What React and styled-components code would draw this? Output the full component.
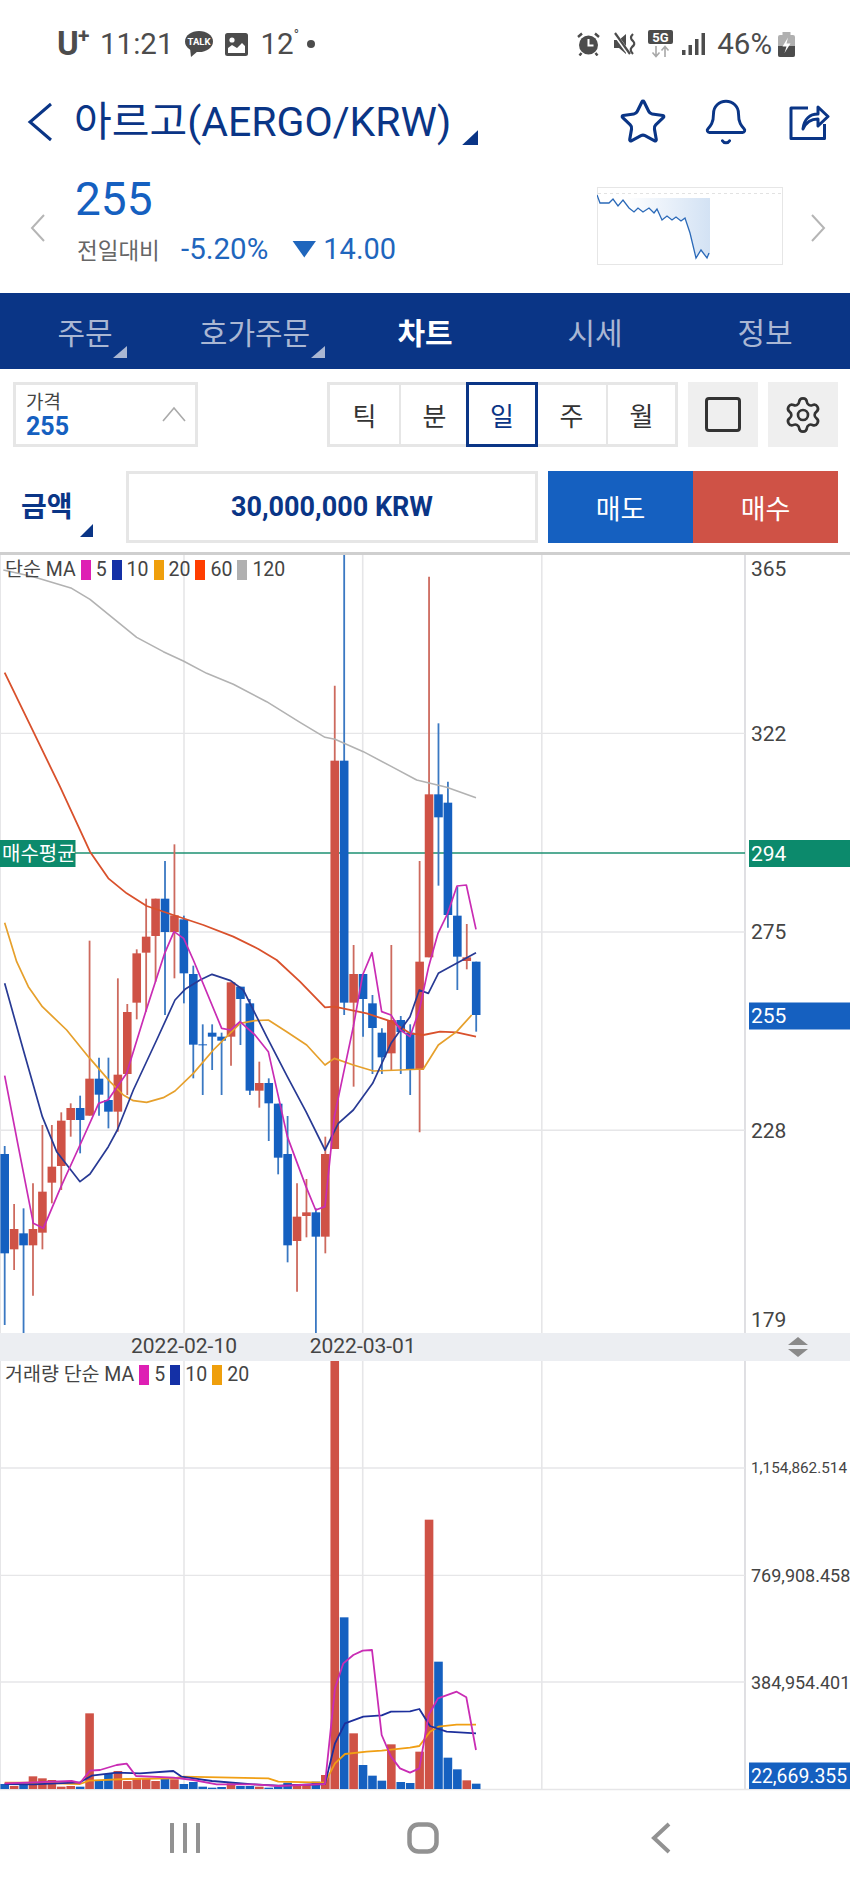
import { Fragment } from "react";
import styled, { createGlobalStyle } from "styled-components";
import { Star, Bell, Settings } from "lucide-react";

const NAVY = "#0a3586";
const BLUE = "#1560c0";
const RED = "#cf5246";
const WICK_BLUE = "#3a78c2";
const WICK_RED = "#cd6a5e";
const GRID = "#e6e6e8";

const GlobalStyle = createGlobalStyle`
  html, body { margin: 0; padding: 0; background: #fff; }
  body { font-family: Roboto, "Noto Sans CJK KR", sans-serif; width: 850px; }
`;

const Page = styled.div`
  width: 850px;
  height: 1889px;
  overflow: hidden;
  background: #fff;
`;

/* status bar */
const StatusBar = styled.div`
  height: 88px;
  box-sizing: border-box;
  padding: 31px 55px 0 57px;
  display: flex;
  justify-content: space-between;
  color: #4c4c4c;
`;

const StatusGroup = styled.div`
  display: flex;
  align-items: center;
  height: 26px;
  gap: ${(p) => p.$gap}px;
`;

const Carrier = styled.span`
  font-size: 33px;
  font-weight: 700;
  line-height: 26px;
  width: 32px;
  margin-right: -1px;
  position: relative;
  sup {
    position: absolute;
    left: 21px;
    top: -5px;
    font-size: 21px;
    line-height: 1;
  }
`;

const StatusText = styled.span`
  font-size: 29.5px;
  line-height: 26px;
  white-space: nowrap;
`;

const Degree = styled.span`
  font-size: 14px;
  line-height: 0;
  vertical-align: 14px;
`;

const StatusDot = styled.span`
  width: 8px;
  height: 8px;
  border-radius: 50%;
  background: #4c4c4c;
  margin-left: -4px;
`;

const StatusSlot = styled.span`
  display: flex;
  margin-left: ${(p) => p.$left || 0}px;
`;

/* title row */
const Header = styled.div`
  height: 68px;
  display: flex;
  align-items: center;
  padding-left: 27px;
  color: ${NAVY};
`;

const Title = styled.h1`
  margin: 0 0 0 21px;
  font-size: 41px;
  font-weight: 400;
  line-height: 68px;
  white-space: nowrap;
`;

const TitleCorner = styled.span`
  width: 16px;
  height: 15px;
  margin: 31px 0 0 11px;
  background: ${NAVY};
  clip-path: polygon(100% 0, 100% 100%, 0 100%);
`;

const HeaderIcons = styled.div`
  margin-left: auto;
  display: flex;
  align-items: center;
  gap: 34px;
  padding-right: 20px;
`;

const StarIcon = styled(Star)`
  margin-right: 2px;
`;

const BellIcon = styled(Bell)`
  margin: 0 3px 0 -3px;
`;

/* quote row */
const Quote = styled.div`
  height: 137px;
  display: flex;
  padding-left: 30px;
`;

const QuoteChevron = styled.div`
  margin-top: 57px;
  height: 30px;
`;

const PriceBlock = styled.div`
  margin-left: 31px;
  padding-top: 20px;
  width: 520px;
`;

const Price = styled.div`
  font-size: 46px;
  line-height: 46px;
  margin-left: -2px;
  color: ${BLUE};
`;

const Change = styled.div`
  display: flex;
  align-items: center;
  margin-top: 11px;
  height: 32px;
  color: #1f66bd;
  font-size: 29px;
`;

const ChangeLabel = styled.span`
  font-size: 22.5px;
  color: #666;
  width: 104px;
`;

const ChangeValue = styled.span`
  font-size: 29.5px;
`;

const ChangeArrow = styled.span`
  width: 24px;
  height: 17px;
  margin: 0 7px 0 24px;
  background: #1f66bd;
  clip-path: polygon(0 0, 100% 0, 50% 100%);
`;

const MiniChart = styled.svg`
  width: 186px;
  height: 78px;
  margin: 31px 27px 0 0;
  display: block;
`;

/* tab bar */
const Tabs = styled.nav`
  height: 76px;
  background: ${NAVY};
  display: grid;
  grid-template-columns: repeat(5, 170px);
`;

const Tab = styled.div`
  position: relative;
  display: flex;
  align-items: center;
  justify-content: center;
  padding-bottom: 1px;
  font-size: 30px;
  font-weight: ${(p) => (p.$active ? 700 : 400)};
  color: ${(p) => (p.$active ? "#fff" : "#aab7d3")};
`;

const TabCorner = styled.span`
  position: absolute;
  top: 53px;
  left: ${(p) => p.$left}px;
  width: 14px;
  height: 12px;
  background: #aab7d3;
  clip-path: polygon(100% 0, 100% 100%, 0 100%);
`;

/* period + tools row */
const Toolbar = styled.div`
  height: 65px;
  margin-top: 13px;
  padding: 0 11px 0 13px;
  display: flex;
  align-items: stretch;
`;

const PriceSelect = styled.div`
  width: 185px;
  box-sizing: border-box;
  border: 3px solid #e6e6e6;
  padding: 7px 0 0 10px;
  position: relative;
`;

const SelectLabel = styled.div`
  font-size: 19px;
  line-height: 22px;
  color: #444;
`;

const SelectValue = styled.div`
  font-size: 25px;
  line-height: 25px;
  font-weight: 700;
  color: ${BLUE};
`;

const SelectChevron = styled.svg`
  position: absolute;
  right: 9px;
  top: 21px;
  width: 24px;
  height: 16px;
`;

const Periods = styled.div`
  margin-left: 129px;
  width: 351px;
  display: grid;
  grid-template-columns: repeat(5, 1fr);
  box-sizing: border-box;
  border: 3px solid #e6e6e6;
`;

const Period = styled.div`
  display: flex;
  align-items: center;
  justify-content: center;
  font-size: 26px;
  color: #333;
  box-sizing: border-box;
  border-left: ${(p) => (p.$first ? "none" : "2px solid #e6e6e6")};
  ${(p) => p.$active && `
    border: 3px solid ${NAVY};
    margin: -3px -1px -3px -2px;
    color: ${NAVY};
  `}
`;

const ToolButton = styled.div`
  width: 70px;
  margin-left: 10px;
  background: #efefef;
  display: flex;
  align-items: center;
  justify-content: center;
  color: #333;
`;

const SquareGlyph = styled.span`
  width: 36px;
  height: 35px;
  box-sizing: border-box;
  border: 3.5px solid #333;
  border-radius: 4px;
`;

/* order row */
const OrderRow = styled.div`
  height: 72px;
  margin-top: 24px;
  padding: 0 11px 0 21px;
  display: flex;
`;

const AmountLabel = styled.div`
  position: relative;
  width: 105px;
  font-size: 28px;
  font-weight: 700;
  color: ${NAVY};
  line-height: 74px;
`;

const AmountCorner = styled.span`
  position: absolute;
  left: 59px;
  top: 53px;
  width: 13px;
  height: 13px;
  background: ${NAVY};
  clip-path: polygon(100% 0, 100% 100%, 0 100%);
`;

const AmountInput = styled.div`
  width: 412px;
  box-sizing: border-box;
  border: 3px solid #e6e6e6;
  display: flex;
  align-items: center;
  justify-content: center;
  font-size: 27px;
  font-weight: 700;
  color: ${NAVY};
`;

const TradeButton = styled.div`
  width: 145px;
  margin-left: ${(p) => p.$gap || 0}px;
  background: ${(p) => p.$color};
  display: flex;
  align-items: center;
  justify-content: center;
  font-size: 27px;
  color: #fff;
`;

/* charts */
const ChartFrame = styled.section`
  position: relative;
  height: ${(p) => p.$height}px;
  margin-top: ${(p) => p.$top || 0}px;
  ${(p) => p.$rule && "border-top: 3px solid #cfcfcf;"}
  svg { display: block; }
`;

const Legend = styled.div`
  position: absolute;
  left: 5px;
  top: ${(p) => p.$top}px;
  display: flex;
  align-items: center;
  gap: 5px;
  font-size: 19.5px;
  line-height: 20px;
  color: #444;
  white-space: nowrap;
`;

const Swatch = styled.span`
  width: 10px;
  height: 20px;
  background: ${(p) => p.$color};
`;

const DateBar = styled.div`
  position: relative;
  height: 28px;
  background: #eceef2;
`;

const DateTick = styled.span`
  position: absolute;
  left: ${(p) => p.$x}px;
  top: 0;
  transform: translateX(-50%);
  font-size: 21px;
  line-height: 27px;
  color: #444;
`;

const ResizeHandle = styled.svg`
  position: absolute;
  left: 787px;
  top: 3px;
  width: 22px;
  height: 22px;
`;

const AxisText = styled.text`
  font-family: Roboto, sans-serif;
  font-size: ${(p) => p.$size || 21}px;
  fill: ${(p) => p.$fill || "#444"};
  dominant-baseline: central;
`;

const TagText = styled.text`
  font-family: Roboto, "Noto Sans CJK KR", sans-serif;
  font-size: 20px;
  fill: #fff;
  dominant-baseline: central;
`;

/* system nav */
const SystemNav = styled.div`
  height: 94px;
  padding-left: 66px;
  display: grid;
  grid-template-columns: repeat(3, 238px);
  align-items: center;
  justify-items: center;
`;

const xAt = (i) => 4.7 + i * 9.43;
const zY = (z) => 930 + z / 3;
const zPoints = (pts, toY) => pts.map(([x, y]) => `${x / 3},${toY(y)}`).join(" ");

// [bodyTop, bodyBottom, wickTop, wickBottom, up], y in crop units of the lower price area
const candles = [
  [672, 970, 648, 1185, 0], [897, 958, 822, 1020, 1], [910, 946, 835, 1210, 0], [897, 946, 760, 1097, 1],
  [785, 908, 585, 958, 1], [710, 758, 585, 820, 1], [572, 708, 547, 780, 1], [534, 570, 520, 620, 1],
  [534, 570, 497, 670, 0], [446, 557, 32, 557, 1], [446, 494, 383, 557, 0], [510, 545, 383, 595, 0],
  [434, 545, 145, 605, 1], [246, 432, 222, 495, 1], [70, 218, 58, 268, 1], [20, 68, -94, 245, 1],
  [-94, 18, -94, 155, 1], [-94, 6, -207, 255, 0], [-44, 6, -257, 145, 1], [-32, 130, -43, 220, 0],
  [132, 344, 107, 445, 0], [343, 346, 283, 495, 0], [308, 320, 283, 420, 0], [320, 332, 308, 495, 0],
  [157, 320, 157, 407, 1], [170, 207, 170, 345, 0], [220, 482, 207, 495, 0], [459, 482, 395, 533, 1],
  [459, 520, 445, 633, 0], [521, 683, 521, 733, 0], [672, 946, 558, 997, 0], [860, 933, 760, 1085, 1],
  [847, 858, 747, 922, 1], [847, 920, 835, 1210, 0], [672, 920, 620, 970, 1], [-508, 657, -733, 657, 1],
  [-508, 218, -1125, 255, 0], [132, 218, 45, 470, 1], [132, 207, 132, 320, 0], [220, 294, 195, 432, 0],
  [308, 382, 295, 432, 0], [270, 370, 45, 420, 1], [270, 306, 258, 432, 0], [308, 420, 283, 495, 0],
  [95, 420, -207, 607, 1], [-407, 82, -1060, 82, 1], [-407, -338, -620, -133, 0], [-382, -45, -445, -7, 0],
  [-43, 80, -130, 180, 0], [82, 93, -18, 118, 1], [95, 255, 95, 305, 0],
];

const ma120 = [[10, -1080], [100, -1060], [215, -1025], [270, -992], [340, -935], [410, -878], [490, -835], [550, -807], [620, -770], [700, -737], [800, -685], [900, -623], [975, -578], [1005, -572], [1090, -535], [1175, -490], [1250, -450], [1340, -428], [1428, -397]];
const ma60 = [[14, -772], [100, -595], [180, -430], [270, -235], [325, -155], [380, -110], [440, -72], [520, -45], [610, -15], [700, 20], [775, 57], [830, 90], [900, 155], [975, 232], [1003, 230], [1100, 250], [1175, 275], [1230, 310], [1270, 315], [1320, 305], [1370, 307], [1428, 320]];
const ma20 = [[14, -22], [50, 95], [85, 170], [127, 230], [200, 300], [265, 380], [330, 455], [370, 495], [400, 512], [440, 517], [490, 503], [525, 483], [580, 430], [640, 360], [690, 310], [720, 280], [765, 272], [805, 270], [860, 305], [920, 345], [975, 405], [1003, 385], [1060, 405], [1120, 423], [1200, 420], [1270, 417], [1315, 345], [1370, 305], [1415, 255]];
const ma10 = [[14, 160], [70, 360], [127, 560], [170, 665], [240, 755], [270, 732], [325, 650], [352, 600], [400, 480], [470, 330], [525, 210], [555, 178], [600, 150], [636, 133], [692, 152], [730, 180], [800, 320], [862, 440], [918, 545], [975, 660], [1015, 580], [1060, 540], [1118, 460], [1173, 340], [1230, 260], [1258, 180], [1285, 190], [1315, 130], [1370, 100], [1428, 68]];
const ma5 = [[14, 437], [55, 650], [100, 880], [130, 895], [183, 770], [240, 645], [296, 520], [324, 510], [380, 430], [437, 245], [494, 70], [522, 5], [551, 25], [580, 90], [665, 295], [692, 300], [720, 275], [765, 315], [805, 365], [862, 620], [918, 770], [947, 840], [975, 830], [1003, 560], [1060, 290], [1088, 135], [1116, 68], [1145, 245], [1173, 255], [1201, 300], [1230, 320], [1258, 240], [1286, 110], [1314, 10], [1343, -50], [1371, -132], [1399, -135], [1428, -2]];

// bar tops, [top, up], y in crop units of the volume area
const volumes = [
  [552, 0], [558, 1], [555, 0], [529, 1], [535, 1], [540, 1], [560, 1], [558, 1], [560, 0], [340, 1],
  [543, 0], [522, 0], [513, 1], [543, 1], [535, 1], [535, 1], [543, 1], [535, 0], [538, 1], [552, 0],
  [546, 0], [560, 0], [563, 0], [561, 0], [550, 1], [558, 0], [558, 0], [560, 1], [563, 0], [560, 0],
  [548, 0], [552, 1], [552, 1], [545, 0], [525, 1], [-720, 1], [52, 0], [400, 1], [495, 0], [527, 0],
  [542, 0], [433, 1], [546, 0], [549, 0], [455, 1], [-241, 1], [185, 0], [473, 0], [508, 0], [541, 1], [551, 0],
];

const volY = (z) => 1600 + z / 3;
const vol20 = [[14, 548], [100, 548], [240, 552], [268, 542], [380, 537], [520, 535], [550, 530], [805, 535], [835, 545], [975, 548], [1005, 490], [1035, 462], [1100, 455], [1145, 452], [1230, 443], [1258, 438], [1290, 395], [1315, 380], [1370, 374], [1428, 374]];
const vol10 = [[14, 552], [100, 553], [240, 547], [275, 527], [350, 518], [420, 520], [520, 513], [545, 530], [636, 543], [760, 553], [835, 557], [975, 552], [1005, 430], [1035, 370], [1090, 350], [1145, 346], [1173, 335], [1230, 334], [1258, 327], [1290, 378], [1340, 395], [1428, 400]];
const vol5 = [[14, 550], [100, 547], [215, 543], [240, 549], [270, 512], [300, 510], [350, 495], [380, 491], [408, 528], [520, 533], [580, 540], [650, 553], [760, 553], [835, 558], [975, 552], [1005, 265], [1030, 190], [1060, 165], [1088, 152], [1116, 150], [1145, 405], [1173, 470], [1200, 505], [1230, 518], [1258, 505], [1286, 345], [1314, 295], [1370, 275], [1399, 292], [1428, 450]];

const spark = [[0, 8], [3, 16], [12, 16], [16, 12], [21, 19], [26, 13], [32, 21], [37, 25], [41, 21], [46, 25], [52, 21], [57, 26], [60, 22], [65, 33], [70, 29], [75, 33], [79, 30], [84, 34], [88, 31], [93, 46], [99, 71], [104, 63], [110, 71], [112, 66]];

const MA_COLORS = { m5: "#de1fb4", m10: "#1430a6", m20: "#ef9f0c", m60: "#ff3d00", m120: "#b0b0b0" };

const Line = ({ points, color, width = 1.6 }) => (
  <polyline points={points} fill="none" stroke={color} strokeWidth={width} strokeLinejoin="round" />
);

const VerticalGrid = ({ top, bottom }) => (
  <>
    {[184, 362.7, 541.8].map((x) => (
      <line key={x} x1={x} x2={x} y1={top} y2={bottom} stroke={GRID} strokeWidth="1.6" />
    ))}
    <line x1="745" x2="745" y1={top} y2={bottom} stroke="#d8d8dc" strokeWidth="1.6" />
    <line x1="0.5" x2="0.5" y1={top} y2={bottom} stroke={GRID} strokeWidth="1" />
  </>
);

const PriceChart = () => (
  <svg width="850" height="778" viewBox="0 555 850 778">
    <VerticalGrid top={555} bottom={1333} />
    {[733.4, 932, 1130.3].map((y) => (
      <line key={y} x1="0" x2="745" y1={y} y2={y} stroke={GRID} strokeWidth="1.4" />
    ))}
    <line x1="0" x2="745" y1="853" y2="853" stroke="#1d9072" strokeWidth="1.6" />
    {candles.map(([bt, bb, wt, wb, up], i) => {
      const x = xAt(i);
      return (
        <g key={i}>
          <line x1={x} x2={x} y1={Math.max(zY(wt), 555)} y2={Math.min(zY(wb), 1333)} stroke={up ? WICK_RED : WICK_BLUE} strokeWidth="1.8" />
          <rect x={x - 4.3} width="8.6" y={zY(bt)} height={(bb - bt) / 3} fill={up ? RED : BLUE} />
        </g>
      );
    })}
    <Line points={zPoints(ma120, zY)} color="#b2b2b2" />
    <Line points={zPoints(ma60, zY)} color="#d9512c" width={1.8} />
    <Line points={zPoints(ma20, zY)} color="#e6a02c" width={1.7} />
    <Line points={zPoints(ma10, zY)} color="#283a94" width={1.7} />
    <Line points={zPoints(ma5, zY)} color="#c92cb4" width={1.7} />

    <rect x="0" y="840" width="75.5" height="27" fill="#0c8a6c" />
    <TagText x="2" y="853.5">매수평균</TagText>
    <rect x="749" y="840" width="101" height="27" fill="#0c8a6c" />
    <AxisText x="751" y="853.5" $fill="#fff">294</AxisText>
    <rect x="749" y="1002.5" width="101" height="27" fill={BLUE} />
    <AxisText x="751" y="1016" $fill="#fff">255</AxisText>
    <AxisText x="751" y="569">365</AxisText>
    <AxisText x="751" y="733.5">322</AxisText>
    <AxisText x="751" y="932">275</AxisText>
    <AxisText x="751" y="1130.5">228</AxisText>
    <AxisText x="751" y="1320">179</AxisText>
  </svg>
);

const VolumeChart = () => (
  <svg width="850" height="430" viewBox="0 1361 850 430">
    <VerticalGrid top={1361} bottom={1789} />
    {[1468, 1575.4, 1682].map((y) => (
      <line key={y} x1="0" x2="745" y1={y} y2={y} stroke={GRID} strokeWidth="1.4" />
    ))}
    <line x1="0" x2="850" y1="1789.5" y2="1789.5" stroke={GRID} strokeWidth="1.4" />
    {volumes.map(([top, up], i) => (
      <rect key={i} x={xAt(i) - 4.3} width="8.6" y={Math.max(volY(top), 1361)} height={1789 - Math.max(volY(top), 1361)} fill={up ? RED : BLUE} />
    ))}
    <Line points={zPoints(vol20, volY)} color="#f09f14" width={1.8} />
    <Line points={zPoints(vol10, volY)} color="#1d2f9c" width={1.8} />
    <Line points={zPoints(vol5, volY)} color="#c92cb4" width={1.8} />

    <AxisText x="751" y="1468" $size={15.3}>1,154,862.514</AxisText>
    <AxisText x="751" y="1575.5" $size={18}>769,908.458</AxisText>
    <AxisText x="751" y="1682" $size={18}>384,954.401</AxisText>
    <rect x="749" y="1762.5" width="101" height="26.5" fill={BLUE} />
    <AxisText x="751" y="1776" $size={19.4} $fill="#fff">22,669.355</AxisText>
  </svg>
);

const MaLegend = ({ label, top, items }) => (
  <Legend $top={top}>
    <span>{label}</span>
    {items.map(([value, color]) => (
      <Fragment key={value}>
        <Swatch $color={color} />
        <span>{value}</span>
      </Fragment>
    ))}
  </Legend>
);

const TalkIcon = () => (
  <svg width="28" height="26" viewBox="0 0 28 26">
    <ellipse cx="14" cy="10.5" rx="14" ry="10.5" fill="#4c4c4c" />
    <path d="M5 17 L6 26 L13 20 Z" fill="#4c4c4c" />
    <text x="14" y="14" textAnchor="middle" fontFamily="Roboto, sans-serif" fontWeight="700" fontSize="9.5" fill="#fff">TALK</text>
  </svg>
);

const PictureIcon = () => (
  <svg width="23" height="23" viewBox="0 0 23 23">
    <rect width="23" height="23" rx="2.5" fill="#4c4c4c" />
    <circle cx="7" cy="7" r="2.6" fill="#fff" />
    <path d="M3 20 L3 15 L7 12 L12 15 L17 10 L20 13 L20 20 Z" fill="#fff" />
  </svg>
);

const AlarmIcon = () => (
  <svg width="23" height="24" viewBox="0 0 23 24">
    <circle cx="11.5" cy="13" r="9.5" fill="#4c4c4c" />
    <path d="M11.5 7 V13.5 H16.5" fill="none" stroke="#fff" strokeWidth="2" />
    <path d="M1 5 L5 1.5 M22 5 L18 1.5 M4.5 21 L2.5 23.5 M18.5 21 L20.5 23.5" stroke="#4c4c4c" strokeWidth="2.4" />
  </svg>
);

const MuteIcon = () => (
  <svg width="24" height="24" viewBox="0 0 24 24">
    <path d="M1 8 H6 L13 2 V22 L6 16 H1 Z" fill="#4c4c4c" />
    <path d="M1 1 L17 23" stroke="#fff" strokeWidth="4" />
    <path d="M2 1 L17 22" stroke="#4c4c4c" strokeWidth="2.2" />
    <path d="M20 2 Q16 6 20 9 Q23 12 19 15 Q16 18 20 22" fill="none" stroke="#4c4c4c" strokeWidth="2.2" />
  </svg>
);

const FiveGIcon = () => (
  <svg width="25" height="28" viewBox="0 0 25 28">
    <rect width="25" height="14" rx="2" fill="#4c4c4c" />
    <text x="12.5" y="11.5" textAnchor="middle" fontFamily="Roboto, sans-serif" fontWeight="700" fontSize="13" fill="#fff">5G</text>
    <path d="M8 16 V26 M4.5 22.5 L8 26.5 L11.5 22.5" fill="none" stroke="#a8a8a8" strokeWidth="1.6" />
    <path d="M17 27 V17 M13.5 20.5 L17 16.5 L20.5 20.5" fill="none" stroke="#a8a8a8" strokeWidth="1.6" />
  </svg>
);

const SignalIcon = () => (
  <svg width="23" height="22" viewBox="0 0 23 22">
    <rect x="0" y="17" width="3.5" height="5" fill="#4c4c4c" />
    <rect x="6.5" y="12" width="3.5" height="10" fill="#4c4c4c" />
    <rect x="13" y="6" width="3.5" height="16" fill="#4c4c4c" />
    <rect x="19.5" y="0" width="3.5" height="22" fill="#4c4c4c" />
  </svg>
);

const BatteryIcon = () => (
  <svg width="17" height="25" viewBox="0 0 17 25">
    <rect x="4.5" y="0" width="8" height="3" fill="#b0b0b0" />
    <rect x="0" y="3" width="17" height="22" rx="2" fill="#b0b0b0" />
    <path d="M0 14 H17 V23 a2 2 0 0 1 -2 2 H2 a2 2 0 0 1 -2 -2 Z" fill="#4c4c4c" />
    <path d="M10 5.5 L4.5 14.5 H8.5 L6.5 21 L12.5 11.5 H8.5 Z" fill="#fff" />
  </svg>
);

const ChevronGlyph = ({ w, h, points, color, stroke }) => (
  <svg width={w} height={h} viewBox={`0 0 ${w} ${h}`}>
    <polyline points={points} fill="none" stroke={color} strokeWidth={stroke} />
  </svg>
);

const ShareIcon = () => (
  <svg width="42" height="40" viewBox="0 0 42 40">
    <path d="M20 6 H3 V36.5 H36.5 V22" fill="none" stroke={NAVY} strokeWidth="3" strokeLinejoin="round" />
    <path d="M15 27 C16 17 22 12 30 12 V5 L40 14.5 L30 24 V17 C23 17 18 20 15 27 Z" fill="none" stroke={NAVY} strokeWidth="3" strokeLinejoin="round" />
  </svg>
);

const App = () => (
  <Page>
    <GlobalStyle />
    <StatusBar>
      <StatusGroup $gap={12}>
        <Carrier>U<sup>+</sup></Carrier>
        <StatusText>11:21</StatusText>
        <TalkIcon />
        <PictureIcon />
        <StatusText>12<Degree>°</Degree></StatusText>
        <StatusDot />
      </StatusGroup>
      <StatusGroup $gap={0}>
        <StatusSlot><AlarmIcon /></StatusSlot>
        <StatusSlot $left={13}><MuteIcon /></StatusSlot>
        <StatusSlot $left={11}><FiveGIcon /></StatusSlot>
        <StatusSlot $left={9}><SignalIcon /></StatusSlot>
        <StatusSlot $left={12}><StatusText>46%</StatusText></StatusSlot>
        <StatusSlot $left={6}><BatteryIcon /></StatusSlot>
      </StatusGroup>
    </StatusBar>

    <Header>
      <ChevronGlyph w={26} h={40} points="24,2 3,20 24,38" color={NAVY} stroke={3} />
      <Title>아르고(AERGO/KRW)</Title>
      <TitleCorner />
      <HeaderIcons>
        <StarIcon size={50} strokeWidth={1.5} color={NAVY} />
        <BellIcon size={50} strokeWidth={1.4} color={NAVY} />
        <ShareIcon />
      </HeaderIcons>
    </Header>

    <Quote>
      <QuoteChevron>
        <ChevronGlyph w={16} h={30} points="14,2 2,15 14,28" color="#b5b5b5" stroke={2} />
      </QuoteChevron>
      <PriceBlock>
        <Price>255</Price>
        <Change>
          <ChangeLabel>전일대비</ChangeLabel>
          <ChangeValue>-5.20%</ChangeValue>
          <ChangeArrow />
          <span>14.00</span>
        </Change>
      </PriceBlock>
      <MiniChart viewBox="0 0 186 78">
        <defs>
          <linearGradient id="sparkFill" x1="0" x2="1" y1="0" y2="0">
            <stop offset="0.25" stopColor="#ffffff" />
            <stop offset="1" stopColor="#d3e2f4" />
          </linearGradient>
        </defs>
        <rect x="0.5" y="0.5" width="185" height="77" fill="#fff" stroke="#e6e6e6" />
        <line x1="1" x2="185" y1="6.5" y2="6.5" stroke="#e2e2e2" strokeDasharray="3 3" />
        <polygon points={`${spark.map(([x, y]) => `${x},${y}`).join(" ")} 113,69 113,11 0,11`} fill="url(#sparkFill)" />
        <polyline points={spark.map(([x, y]) => `${x},${y}`).join(" ")} fill="none" stroke="#2a69b8" strokeWidth="1.3" />
      </MiniChart>
      <QuoteChevron>
        <ChevronGlyph w={16} h={30} points="2,2 14,15 2,28" color="#b5b5b5" stroke={2} />
      </QuoteChevron>
    </Quote>

    <Tabs>
      <Tab>주문<TabCorner $left={113} /></Tab>
      <Tab>호가주문<TabCorner $left={141} /></Tab>
      <Tab $active>차트</Tab>
      <Tab>시세</Tab>
      <Tab>정보</Tab>
    </Tabs>

    <Toolbar>
      <PriceSelect>
        <SelectLabel>가격</SelectLabel>
        <SelectValue>255</SelectValue>
        <SelectChevron viewBox="0 0 24 16">
          <polyline points="1,15 12,2 23,15" fill="none" stroke="#aaa" strokeWidth="1.6" />
        </SelectChevron>
      </PriceSelect>
      <Periods>
        <Period $first>틱</Period>
        <Period>분</Period>
        <Period $active>일</Period>
        <Period $first>주</Period>
        <Period>월</Period>
      </Periods>
      <ToolButton><SquareGlyph /></ToolButton>
      <ToolButton><Settings size={40} strokeWidth={1.6} /></ToolButton>
    </Toolbar>

    <OrderRow>
      <AmountLabel>금액<AmountCorner /></AmountLabel>
      <AmountInput>30,000,000 KRW</AmountInput>
      <TradeButton $gap={10} $color={BLUE}>매도</TradeButton>
      <TradeButton $color={RED}>매수</TradeButton>
    </OrderRow>

    <ChartFrame $height={778} $top={9} $rule>
      <MaLegend
        label="단순 MA"
        top={5}
        items={[["5", MA_COLORS.m5], ["10", MA_COLORS.m10], ["20", MA_COLORS.m20], ["60", MA_COLORS.m60], ["120", MA_COLORS.m120]]}
      />
      <PriceChart />
    </ChartFrame>

    <DateBar>
      <DateTick $x={184}>2022-02-10</DateTick>
      <DateTick $x={362.7}>2022-03-01</DateTick>
      <ResizeHandle viewBox="0 0 22 22">
        <path d="M11 1 L21 9 H1 Z M11 21 L21 13 H1 Z" fill="#8a8a8a" />
      </ResizeHandle>
    </DateBar>

    <ChartFrame $height={430}>
      <MaLegend
        label="거래량 단순 MA"
        top={4}
        items={[["5", MA_COLORS.m5], ["10", MA_COLORS.m10], ["20", MA_COLORS.m20]]}
      />
      <VolumeChart />
    </ChartFrame>

    <SystemNav>
      <svg width="30" height="30" viewBox="0 0 30 30">
        <path d="M2 1 V29 M15 1 V29 M28 1 V29" stroke="#929292" strokeWidth="4" strokeLinecap="round" />
      </svg>
      <svg width="32" height="32" viewBox="0 0 32 32">
        <rect x="2.5" y="2.5" width="27" height="27" rx="9" fill="none" stroke="#929292" strokeWidth="4.5" />
      </svg>
      <svg width="20" height="32" viewBox="0 0 20 32">
        <polyline points="18,2 3,16 18,30" fill="none" stroke="#929292" strokeWidth="4" />
      </svg>
    </SystemNav>
  </Page>
);

export default App;
